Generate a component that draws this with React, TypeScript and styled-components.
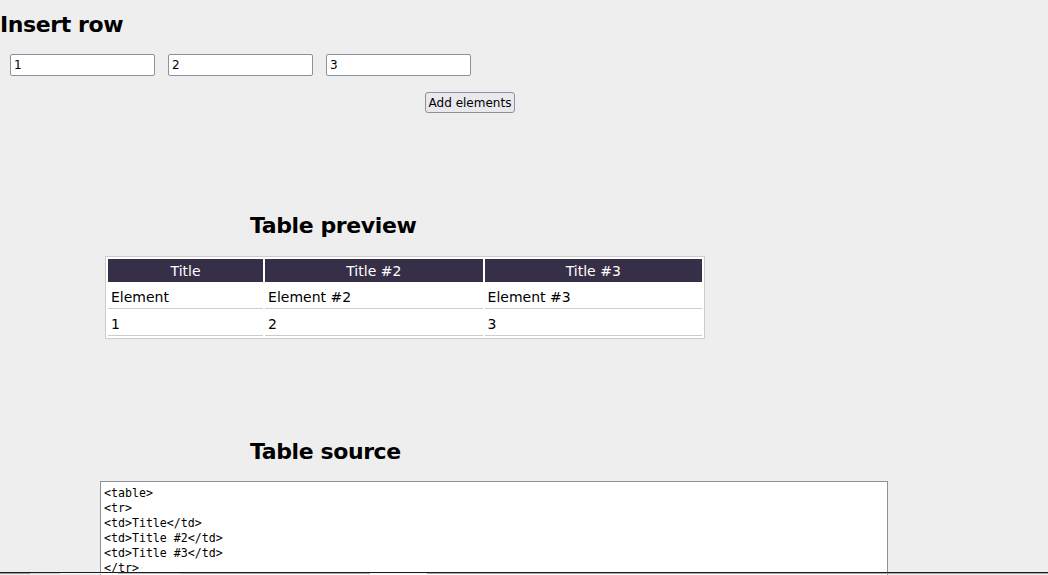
import React from "react";
import styled, { createGlobalStyle } from "styled-components";

const GlobalStyle = createGlobalStyle`
  html, body {
    margin: 0;
    padding: 0;
    background: #eeeeee;
    font-family: "DejaVu Sans", Verdana, sans-serif;
    color: #000;
    overflow: hidden;
  }
`;

const Page = styled.div`
  display: flex;
  flex-direction: column;
  height: 575px;
  overflow: hidden;
`;

const Heading = styled.h1<{ $indent?: number; $top: number }>`
  margin: ${(p) => p.$top}px 0 0 0;
  padding-left: ${(p) => p.$indent ?? 0}px;
  font-size: 22px;
  line-height: 26px;
  font-weight: bold;
  letter-spacing: -0.4px;
`;

const InputRow = styled.div`
  display: flex;
  gap: 13px;
  padding-left: 10px;
  margin-top: 16px;
`;

const TextInput = styled.input`
  box-sizing: border-box;
  width: 145px;
  height: 22px;
  border: 1px solid #8f8f9d;
  border-radius: 2px;
  background: #fff;
  padding: 0 3px;
  font-family: "DejaVu Sans", Verdana, sans-serif;
  font-size: 12px;
  color: #000;
  outline: none;
`;

const ButtonRow = styled.div`
  display: flex;
  justify-content: center;
  width: 940px;
  margin-top: 16px;
`;

const Button = styled.button`
  box-sizing: border-box;
  height: 21px;
  width: 90px;
  padding: 0;
  border: 1px solid #8f8f9d;
  border-radius: 3px;
  background: #e9e9ed;
  font-family: "DejaVu Sans", Tahoma, sans-serif;
  font-size: 12px;
  color: #000;
`;

const PreviewTable = styled.table`
  margin: 17px 0 0 105px;
  width: 600px;
  border: 1px solid #cccccc;
  border-spacing: 2px;
  background: #fff;
  font-size: 14px;
`;

const HeadCell = styled.th<{ $w: number }>`
  width: ${(p) => p.$w}px;
  background: #372f48;
  color: #fff;
  font-weight: normal;
  text-align: center;
  padding: 3px 3px 2px;
  line-height: 18px;
`;

const BodyCell = styled.td`
  padding: 4px 3px 1px;
  line-height: 19px;
  border-bottom: 1px solid #cccccc;
  text-align: left;
`;

const Source = styled.textarea`
  box-sizing: border-box;
  margin: 16px 0 0 100px;
  width: 788px;
  height: 300px;
  flex-shrink: 0;
  border: 1px solid #8f8f9d;
  background: #fff;
  padding: 4px 3px 3px;
  font-family: "DejaVu Sans Mono", "Liberation Mono", monospace;
  font-size: 11.6px;
  line-height: 15px;
  resize: none;
  color: #000;
  outline: none;
`;

const BottomEdge = styled.div`
  position: fixed;
  left: 0;
  right: 0;
  bottom: 0;
  height: 2px;
  border-top: 1px solid #1c1c1c;
  display: flex;
`;

const EdgeSeg = styled.div<{ $w: number; $c: string }>`
  width: ${(p) => p.$w}px;
  height: 1px;
  background: ${(p) => p.$c};
`;

const headers = ["Title", "Title #2", "Title #3"];
const widths = [150, 213, 213];
const rows = [
  ["Element", "Element #2", "Element #3"],
  ["1", "2", "3"],
];

const source = [
  "<table>",
  "<tr>",
  ...headers.map((h) => `<td>${h}</td>`),
  "</tr>",
  ...rows.flatMap((r) => ["<tr>", ...r.map((c) => `<td>${c}</td>`), "</tr>"]),
  "</table>",
].join("\n");

const segments: [number, string][] = [
  [30, "#9a9a9a"],
  [30, "#cfcfcf"],
  [58, "#f4f4f4"],
  [62, "#bdbdbd"],
  [190, "#a7ab9c"],
  [57, "#f2f2f2"],
  [621, "#a9ad9f"],
];

export default function App() {
  return (
    <Page>
      <GlobalStyle />
      <Heading $top={12}>Insert row</Heading>
      <InputRow>
        <TextInput defaultValue="1" />
        <TextInput defaultValue="2" />
        <TextInput defaultValue="3" />
      </InputRow>
      <ButtonRow>
        <Button>Add elements</Button>
      </ButtonRow>

      <Heading as="h2" $top={100} $indent={250}>
        Table preview
      </Heading>
      <PreviewTable>
        <tbody>
          <tr>
            {headers.map((h, i) => (
              <HeadCell key={h} $w={widths[i]}>
                {h}
              </HeadCell>
            ))}
          </tr>
          {rows.map((r, ri) => (
            <tr key={ri}>
              {r.map((c) => (
                <BodyCell key={c}>{c}</BodyCell>
              ))}
            </tr>
          ))}
        </tbody>
      </PreviewTable>

      <Heading as="h2" $top={100} $indent={250}>
        Table source
      </Heading>
      <Source readOnly value={source} />

      <BottomEdge>
        {segments.map(([w, c], i) => (
          <EdgeSeg key={i} $w={w} $c={c} />
        ))}
      </BottomEdge>
    </Page>
  );
}
